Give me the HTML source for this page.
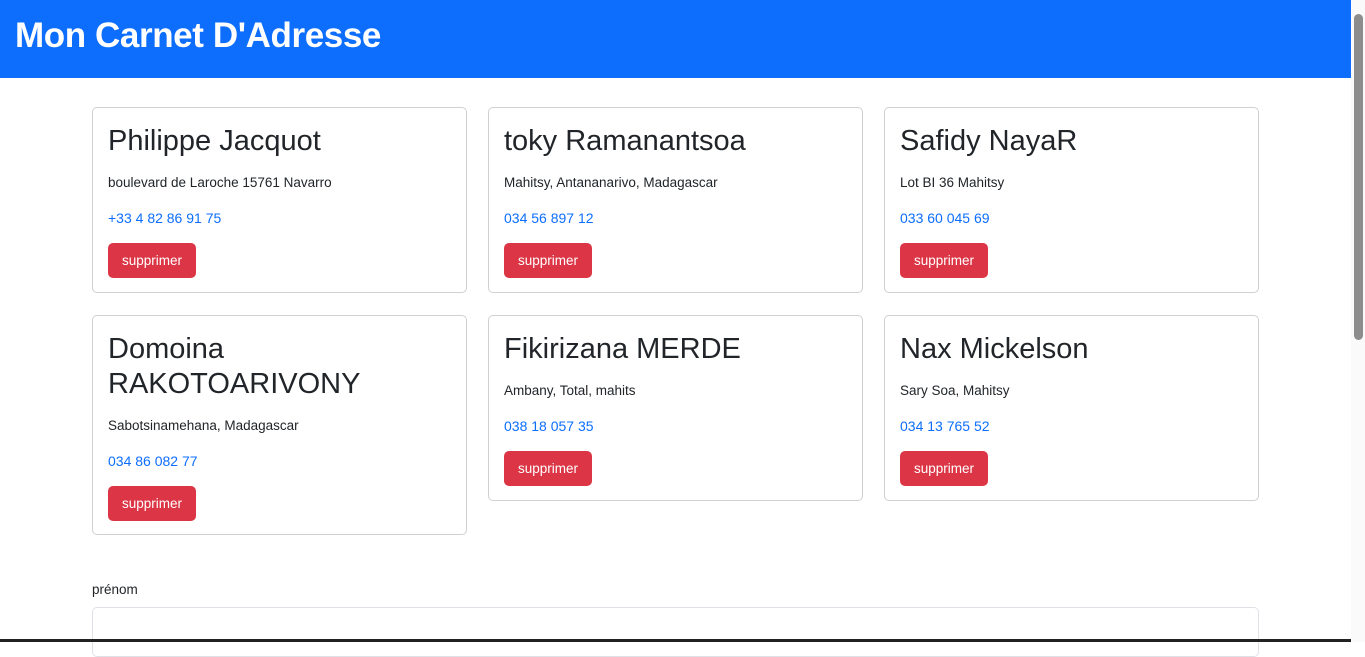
<!DOCTYPE html>
<html><head><meta charset="utf-8"><style>
body{margin:0;width:1365px;height:642px;overflow:hidden;background:#fff;font-family:"Liberation Sans",sans-serif;color:#212529;position:relative}
.hdr{position:absolute;left:0;top:0;width:1351px;height:78px;background:#0d6efd}
.hdr h1{margin:0;position:absolute;left:15px;top:16px;color:#fff;font-size:35px;font-weight:bold;letter-spacing:-0.4px}
.card{position:absolute;width:375px;border:1px solid #d0d0d0;border-radius:5px;box-sizing:border-box}
.card h2{position:absolute;left:15px;margin:0;font-size:29px;font-weight:normal;line-height:35px;width:340px}
.card .a,.card .p{position:absolute;left:15px;font-size:13.5px}
.card .p{color:#0d6efd;font-size:14px}
.card .b{position:absolute;left:15px;width:88px;height:35px;background:#dc3545;color:#fff;border-radius:5px;font-size:13.5px;line-height:35px;text-align:center}
.sb{position:absolute;left:1351px;top:0;width:14px;height:642px;background:#fafafa}
.th{position:absolute;left:1354px;top:14px;width:9px;height:326px;background:#8d8d8d;border-radius:5px}
</style></head><body>
<div class="hdr"><h1>Mon Carnet D'Adresse</h1></div>

<div class="card" style="left:92px;top:107px;height:186px"><h2 style="top:16px">Philippe Jacquot</h2><div class="a" style="top:67px">boulevard de Laroche 15761 Navarro</div><div class="p" style="top:102px">+33 4 82 86 91 75</div><div class="b" style="top:135px">supprimer</div></div>
<div class="card" style="left:488px;top:107px;height:186px"><h2 style="top:16px">toky Ramanantsoa</h2><div class="a" style="top:67px">Mahitsy, Antananarivo, Madagascar</div><div class="p" style="top:102px">034 56 897 12</div><div class="b" style="top:135px">supprimer</div></div>
<div class="card" style="left:884px;top:107px;height:186px"><h2 style="top:16px">Safidy NayaR</h2><div class="a" style="top:67px">Lot BI 36 Mahitsy</div><div class="p" style="top:102px">033 60 045 69</div><div class="b" style="top:135px">supprimer</div></div>

<div class="card" style="left:92px;top:315px;height:220px"><h2 style="top:16px">Domoina RAKOTOARIVONY</h2><div class="a" style="top:102px">Sabotsinamehana, Madagascar</div><div class="p" style="top:137px">034 86 082 77</div><div class="b" style="top:170px">supprimer</div></div>
<div class="card" style="left:488px;top:315px;height:186px"><h2 style="top:16px">Fikirizana MERDE</h2><div class="a" style="top:67px">Ambany, Total, mahits</div><div class="p" style="top:102px">038 18 057 35</div><div class="b" style="top:135px">supprimer</div></div>
<div class="card" style="left:884px;top:315px;height:186px"><h2 style="top:16px">Nax Mickelson</h2><div class="a" style="top:67px">Sary Soa, Mahitsy</div><div class="p" style="top:102px">034 13 765 52</div><div class="b" style="top:135px">supprimer</div></div>

<div style="position:absolute;left:92px;top:582px;font-size:13.5px">prénom</div>
<div style="position:absolute;left:92px;top:607px;width:1167px;height:50px;border:1px solid #dee2e6;border-radius:5px;box-sizing:border-box"></div>
<div style="position:absolute;left:0;top:639px;width:1365px;height:3px;background:#222"></div>
<div class="sb"></div><div class="th"></div>
</body></html>
